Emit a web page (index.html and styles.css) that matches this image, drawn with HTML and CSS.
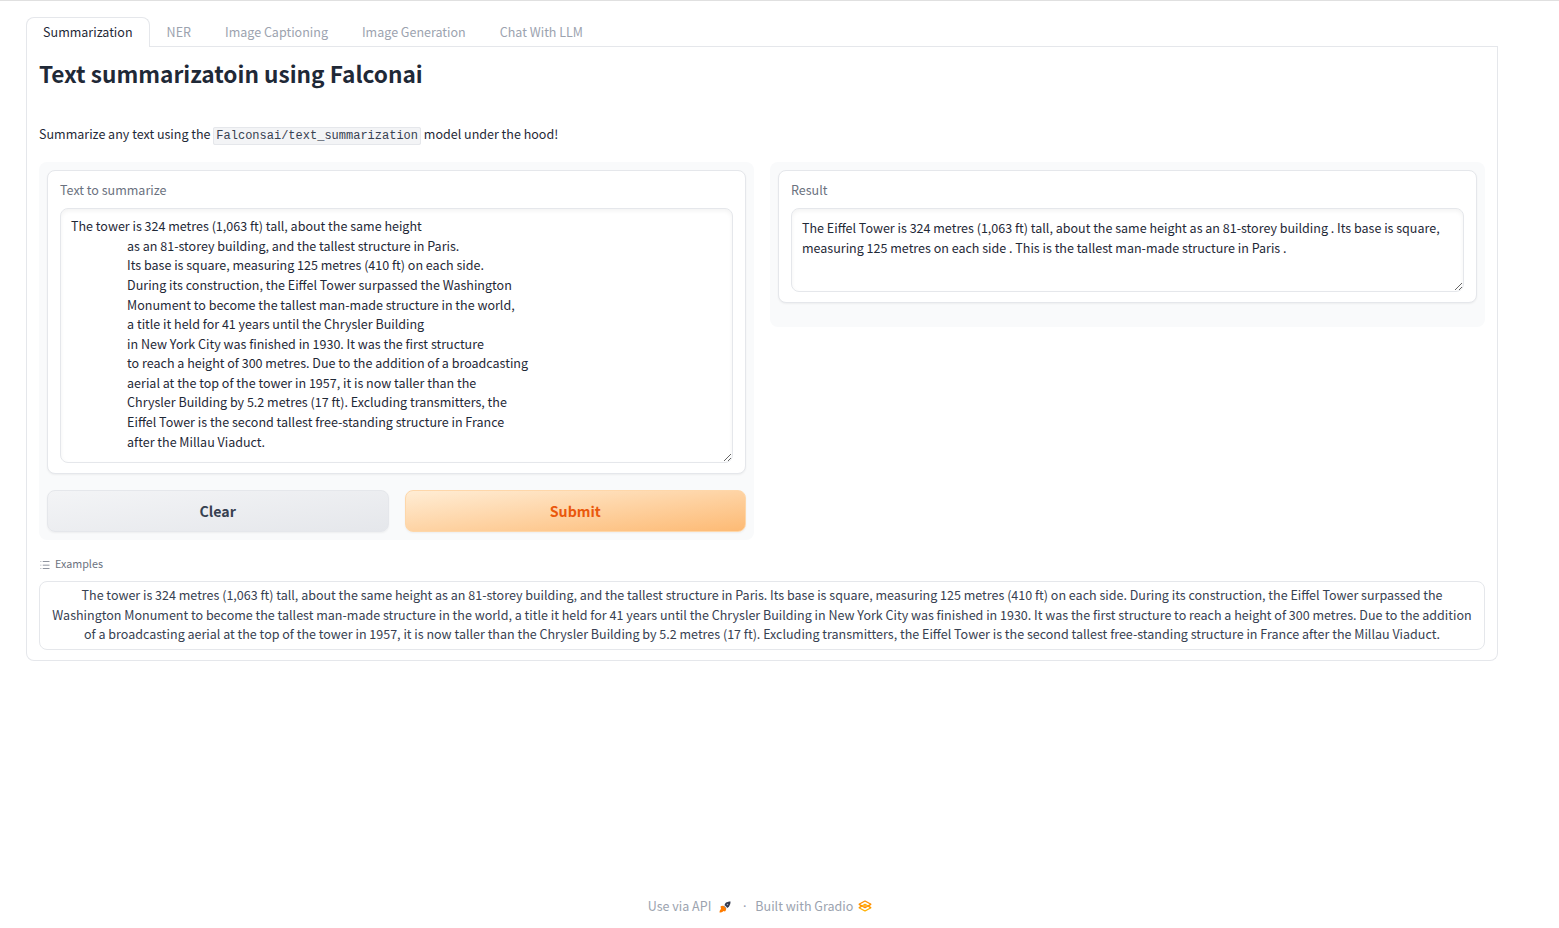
FILE: index.html
```html
<!DOCTYPE html>
<html lang="en">
<head>
<meta charset="utf-8">
<title>Text summarization</title>
<link rel="stylesheet" href="styles.css">
</head>
<body>
<div class="app">
  <nav class="tabs">
    <button class="tab selected">Summarization</button>
    <button class="tab">NER</button>
    <button class="tab">Image Captioning</button>
    <button class="tab">Image Generation</button>
    <button class="tab">Chat With LLM</button>
  </nav>
  <main class="panel">
    <h1 class="title">Text summarizatoin using Falconai</h1>
    <p class="description">Summarize any text using the <code class="model">Falconsai/text_summarization</code> model under the hood!</p>
    <div class="columns">
      <section class="column">
        <label class="block">
          <span class="label">Text to summarize</span>
          <textarea class="field input" spellcheck="false">The tower is 324 metres (1,063 ft) tall, about the same height
                    as an 81-storey building, and the tallest structure in Paris.
                    Its base is square, measuring 125 metres (410 ft) on each side.
                    During its construction, the Eiffel Tower surpassed the Washington
                    Monument to become the tallest man-made structure in the world,
                    a title it held for 41 years until the Chrysler Building
                    in New York City was finished in 1930. It was the first structure
                    to reach a height of 300 metres. Due to the addition of a broadcasting
                    aerial at the top of the tower in 1957, it is now taller than the
                    Chrysler Building by 5.2 metres (17 ft). Excluding transmitters, the
                    Eiffel Tower is the second tallest free-standing structure in France
                    after the Millau Viaduct.</textarea>
        </label>
        <div class="actions">
          <button class="btn secondary">Clear</button>
          <button class="btn primary">Submit</button>
        </div>
      </section>
      <section class="column result">
        <label class="block">
          <span class="label">Result</span>
          <textarea class="field output" spellcheck="false">The Eiffel Tower is 324 metres (1,063 ft) tall, about the same height as an 81-storey building . Its base is square, measuring 125 metres on each side . This is the tallest man-made structure in Paris .</textarea>
        </label>
      </section>
    </div>
    <div class="examples-label">
      <svg class="list-icon" viewBox="0 0 32 32"><path fill="currentColor" d="M10 6h18v2H10zm0 18h18v2H10zm0-9h18v2H10zm-6 0h2v2H4zm0-9h2v2H4zm0 18h2v2H4z"/></svg>
      <span>Examples</span>
    </div>
    <button class="example">
      <span class="row">The tower is 324 metres (1,063 ft) tall, about the same height as an 81-storey building, and the tallest structure in Paris. Its base is square, measuring 125 metres (410 ft) on each side. During its construction, the Eiffel Tower surpassed the</span>
      <span class="row">Washington Monument to become the tallest man-made structure in the world, a title it held for 41 years until the Chrysler Building in New York City was finished in 1930. It was the first structure to reach a height of 300 metres. Due to the addition</span>
      <span class="row">of a broadcasting aerial at the top of the tower in 1957, it is now taller than the Chrysler Building by 5.2 metres (17 ft). Excluding transmitters, the Eiffel Tower is the second tallest free-standing structure in France after the Millau Viaduct.</span>
    </button>
  </main>
  <footer class="footer">
    <span>Use via API</span>
    <svg class="rocket" viewBox="0 0 24 24">
      <path fill="#343b4f" d="M23 1c-4 0-7 1-10 3l-2 4 6 6 3-3c2-3 3-6 3-10z"/>
      <path fill="#ff7c00" d="M3 11c2-2 6-2 8 0l3 3c1 2 0 5-2 7l-3-1c-2 2-5 3-8 3 0-3 1-5 3-7z"/>
      <path fill="#8b91a0" d="m10 9 5 5-1 1-5-5z"/>
      <circle cx="17" cy="7" r="1.500" fill="#a5abb8"/>
    </svg>
    <span class="dot">·</span>
    <span>Built with Gradio</span>
    <svg class="logo" viewBox="0 0 28 24" fill="none" stroke-width="2.800" stroke-linejoin="bevel">
      <path stroke="#ff9100" d="M2 8.500 14 2l12 6.500L14 15.500z"/>
      <path stroke="#ffb000" d="M2 15.500 14 22l12-6.500L14 8.500z"/>
      <path stroke="#ff9100" stroke-width="2.200" d="m2 8.500 6 3.500-6 3.500M26 8.500 20 12l6 3.500"/>
      <circle cx="14" cy="12" r="1.800" fill="#ff9100"/>
    </svg>
  </footer>
</div>
</body>
</html>
```
FILE: styles.css
```css
* { box-sizing: border-box; }
body {
  margin: 0;
  background: #fff;
  color: #1f2937;
  font: 12.53px/19.6px "Noto Sans CJK JP", "Noto Sans CJK SC", sans-serif;
}
button { font: inherit; margin: 0; }
.app {
  height: 928px;
  border-top: 1px solid #e0e0e0;
  padding: 16px 61px 0 26px;
  display: flex;
  flex-direction: column;
}
.tabs {
  display: flex;
  height: 30px;
  border-bottom: 1px solid #e5e7eb;
}
.tab {
  height: 30px;
  padding: 0 16px 2px;
  border: 1px solid transparent;
  border-bottom: 0;
  border-radius: 8px 8px 0 0;
  background: none;
  color: #9ca3af;
  white-space: nowrap;
}
.selected {
  width: 123.6px;
  background: #fff;
  border-color: #e5e7eb;
  color: #1f2937;
}
.panel {
  height: 614px;
  border: 1px solid #e5e7eb;
  border-top: 0;
  border-radius: 0 0 8px 8px;
  padding: 11px 12px 12px;
}
.title {
  margin: 0;
  font-size: 22.65px;
  line-height: 32px;
  font-weight: 600;
}
.description { margin: 34px 0 18px; line-height: 20px; }
.model {
  padding: 1px 2px;
  border: 1px solid #e5e7eb;
  border-radius: 2px;
  background: #f3f4f6;
  color: #374151;
  font: 12px/16px "Liberation Mono", monospace;
}
.columns {
  display: grid;
  grid-template-columns: 715px 715px;
  gap: 16px;
  align-items: start;
}
.column {
  height: 378px;
  padding: 8px;
  border-radius: 8px;
  background: #f9fafb;
}
.result { height: 165px; }
.block {
  display: block;
  padding: 9px 12px 10px;
  border: 1px solid #e5e7eb;
  border-radius: 8px;
  background: #fff;
  box-shadow: 0 1px 2px rgba(0, 0, 0, .05);
}
.label { display: block; height: 28px; color: #6b7280; }
.field {
  display: block;
  width: 100%;
  margin: 0;
  padding: 9px 10px;
  border: 1px solid #e5e7eb;
  border-radius: 8px;
  outline: 0;
  overflow: hidden;
  background: #fff;
  color: #1f2937;
  font: inherit;
  resize: vertical;
  box-shadow: inset 0 2px 4px rgba(0, 0, 0, .05);
}
.input { height: 255px; padding-top: 7.15px; }
.output { height: 84px; }
.actions { display: grid; grid-template-columns: 1fr 1fr; gap: 16px; margin-top: 16px; }
.btn {
  height: 42px;
  padding: 2px 6px 0;
  border: 1px solid #e5e7eb;
  border-radius: 8px;
  font-size: 14.2px;
  font-weight: 600;
  box-shadow: 0 1px 2px rgba(0, 0, 0, .05);
}
.secondary { color: #374151; background: linear-gradient(to bottom right, #f3f4f6, #e5e7eb); }
.primary { color: #ea580c; border-color: #fed7aa; background: linear-gradient(to bottom right, #ffedd5, #fdba74); }
.examples-label {
  display: flex;
  align-items: center;
  gap: 4px;
  height: 18px;
  margin: 15px 0 8px;
  color: #6b7280;
  font-size: 10.75px;
}
.list-icon { width: 12px; height: 12px; margin-top: 2px; }
.example {
  display: block;
  width: 100%;
  height: 69px;
  padding: 3px 0 5px;
  border: 1px solid #e5e7eb;
  border-radius: 8px;
  background: #fff;
  color: #374151;
  text-align: center;
}
.row { display: block; white-space: nowrap; }
.footer {
  display: flex;
  justify-content: center;
  align-items: center;
  height: 20px;
  margin-top: 235px;
  padding-right: 4px;
  color: #9ca3af;
}
.rocket { width: 12px; height: 12px; margin: 1px 0 0 8px; }
.dot { margin: 0 7px 0 10px; }
.logo { width: 14px; height: 12px; margin-left: 5px; }
```
